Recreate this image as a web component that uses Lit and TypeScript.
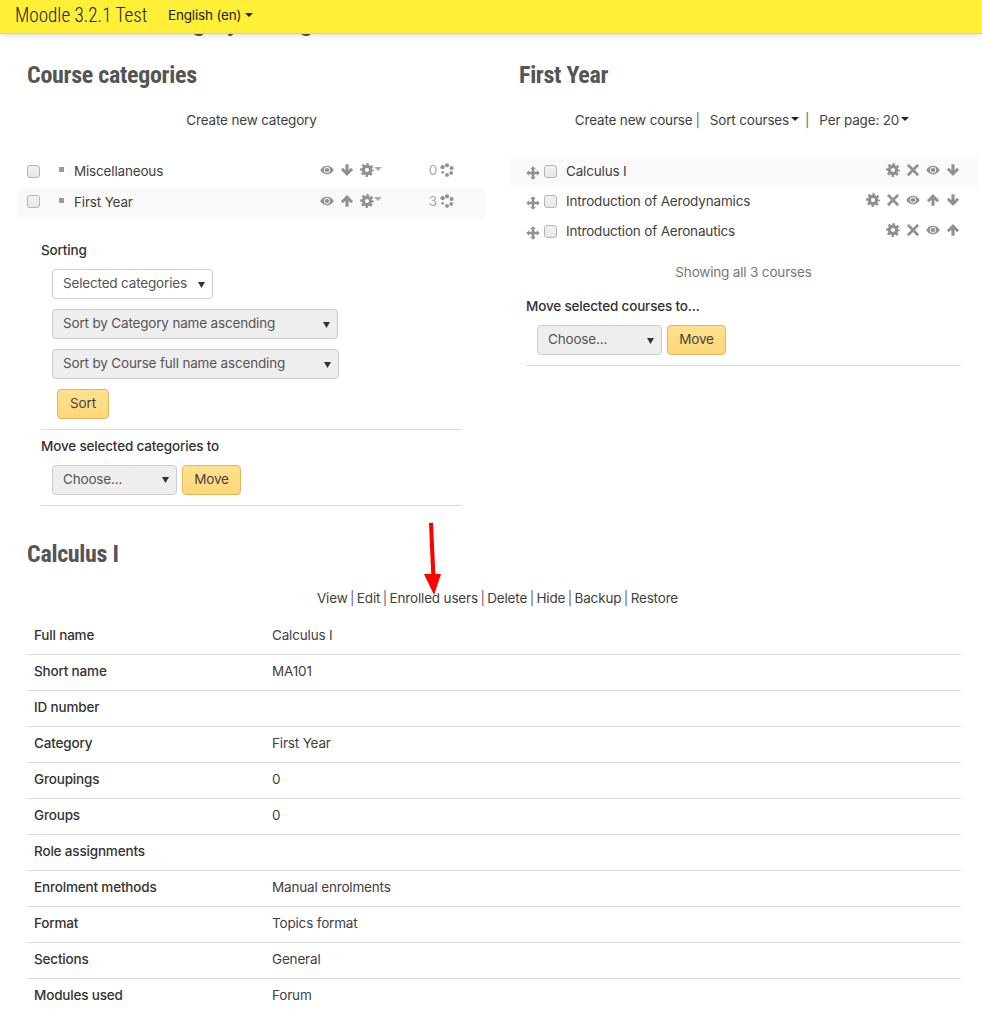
import { LitElement, html, css, svg } from "lit";
import { customElement } from "lit/decorators.js";

const G = "#919191";
const ic = (body: unknown, cls = "") =>
  html`<svg class="ic ${cls}" viewBox="0 0 16 16" width="14" height="14">${body}</svg>`;
const eye = () => ic(svg`<path fill="${G}" d="M8 3C4.500 3 1.700 5.400.3 8c1.400 2.600 4.200 5 7.700 5s6.300-2.400 7.700-5C14.300 5.400 11.500 3 8 3z"/><circle cx="8" cy="8" r="3.600" fill="#e6e6e6"/><circle cx="8" cy="8" r="2.400" fill="${G}"/>`);
const down = () => ic(svg`<path fill="${G}" d="M6.200 1.500h3.600v6.700l2.800-2.800 2.400 2.400L8 14.800 1 7.800l2.400-2.400 2.800 2.800z"/>`);
const up = () => ic(svg`<path fill="${G}" d="M6.200 14.500h3.600V7.800l2.800 2.800 2.400-2.400L8 1.200 1 8.200l2.400 2.400 2.800-2.800z"/>`);
const gear = () => ic(svg`<circle cx="8" cy="8" r="4.200" fill="none" stroke="${G}" stroke-width="3.600"/><circle cx="8" cy="8" r="6.500" fill="none" stroke="${G}" stroke-width="2.800" stroke-dasharray="2.700 2.404" stroke-dashoffset="1.350"/>`);
const times = () => ic(svg`<path fill="${G}" d="M3.200 1L8 5.800 12.800 1 15 3.200 10.200 8l4.800 4.800-2.200 2.200L8 10.200 3.200 15 1 12.800 5.800 8 1 3.200z"/>`);
const move = () => ic(svg`<path fill="${G}" d="M8 .3l3.200 3.200H9.500v3h3V4.800L15.700 8l-3.200 3.200V9.500h-3v3h1.700L8 15.700l-3.200-3.200h1.700v-3h-3v1.700L.3 8l3.200-3.200v1.700h3v-3H4.800z"/>`, "mv");
const cohort = () => ic(svg`<g fill="${G}"><circle cx="8" cy="2.700" r="2.400"/><circle cx="13.200" cy="5.700" r="2.300"/><circle cx="12.800" cy="11.300" r="2.100"/><circle cx="8" cy="13.600" r="2.200"/><circle cx="3" cy="10.700" r="1.500"/><circle cx="2.900" cy="4.800" r="2.400"/></g>`);
const caret = () => html`<span class="caret"></span>`;

const tableRows = [
  ["Full name", "Calculus I"], ["Short name", "MA101"], ["ID number", ""], ["Category", "First Year"],
  ["Groupings", "0"], ["Groups", "0"], ["Role assignments", ""], ["Enrolment methods", "Manual enrolments"],
  ["Format", "Topics format"], ["Sections", "General"], ["Modules used", "Forum"],
];
const cats = [
  { n: "Miscellaneous", i: down, c: "0", alt: false },
  { n: "First Year", i: up, c: "3", alt: true },
];
const courses = [
  { n: "Calculus I", icons: [gear, times, eye, down], alt: true },
  { n: "Introduction of Aerodynamics", icons: [gear, times, eye, up, down], alt: false },
  { n: "Introduction of Aeronautics", icons: [gear, times, eye, up], alt: false },
];
const links = ["View", "Edit", "Enrolled users", "Delete", "Hide", "Backup", "Restore"];

@customElement("app-root")
export class AppRoot extends LitElement {
  static styles = css`
    :host { display: block; position: relative; height: 1009px; overflow: hidden; background: #fff;
      font-family: "Inter", "Lato", sans-serif; font-size: 13.500px; color: #3f3f3f; letter-spacing: -0.17px; }
    * { box-sizing: border-box; }
    .navbar { position: absolute; left: 0; top: 0; right: 0; height: 34px; background: #ffef36; border-bottom: 1px solid #f2dc20;
      box-shadow: 0 2px 6px rgba(0,0,0,.12); display: flex; align-items: center; padding: 0 0 3px 15px; color: #222; z-index: 2; }
    .brand { font-family: "Roboto Condensed", "Liberation Sans Narrow", "Roboto", sans-serif; font-size: 21px; font-weight: 300; letter-spacing: 0; width: 153px; white-space: nowrap; transform: scaleX(.91); transform-origin: left center; }
    .lang { display: flex; align-items: center; gap: 4px; }
    .caret { display: inline-block; width: 0; height: 0; border: 4px solid transparent; border-top-color: #222; border-bottom: 0; }
    .page-title { margin: 0; height: 0; padding-left: 27px; font: 700 26px/1 "Roboto Condensed", "Liberation Sans Narrow", "Roboto", sans-serif; color: #555; white-space: nowrap; transform: translateY(9px); }
    h3 { margin: 0; color: #555; font: 700 24px/30px "Roboto Condensed", "Liberation Sans Narrow", "Roboto", sans-serif; letter-spacing: -0.3px; }
    .cols { display: grid; grid-template-columns: 467px 467px; column-gap: 25px; padding: 60px 0 0 18px; height: 506px; }
    .col h3 { padding-left: 9px; }
    .bar { height: 20px; margin-top: 20px; line-height: 20px; display: flex; justify-content: center; align-items: center; }
    .bar.r { padding-right: 3px; }
    .bar .sep { color: #667; margin: 0 10px 0 3px; }
    .bar .sep.two { margin-left: 6px; }
    .bar .c { margin-left: 2px; display: flex; margin-top: -2px; }
    .rows { margin-top: 27px; }
    .cat { height: 31px; display: flex; align-items: center; padding: 0 0 3px 9px; }
    .cat.alt .check { margin-top: -2px; }
    .cat.alt .acts { margin-top: -3px; }
    .alt { background: #f9f9f9; }
    .check { appearance: none; margin: 0; width: 13px; height: 13px; border: 1px solid #b4b4b4; border-radius: 3px; background: linear-gradient(#f2f2f2, #e6e6e6); flex: none; }
    .bullet { width: 5px; height: 5px; background: #999; margin: -3px 10px 0 19px; flex: none; }
    .name { flex: 1; }
    .acts { display: flex; align-items: center; gap: 6px; margin-top: -2px; }
    .ic { display: block; flex: none; }
    .cat .acts { margin-right: 31px; }
    .acts .caret { border-width: 4px 4px 0; margin-left: -6px; border-top-color: #aaa; margin-top: -3px; }
    .count { color: #aaa; margin-left: 41px; margin-right: -3px; }
    .sortbox { padding: 21px 23px 0 23px; }
    .lbl { font-weight: 500; height: 20px; line-height: 20px; color: #333; }
    select { appearance: none; display: block; height: 30px; padding: 0 20px 2px 10px; border: 1px solid #ccc; border-radius: 4px; font: inherit; letter-spacing: inherit; color: #555;
      background: #eee url("data:image/svg+xml,%3Csvg xmlns='http://www.w3.org/2000/svg' width='7' height='7'%3E%3Cpath d='M0 1h7L3.500 7z' fill='%23333'/%3E%3C/svg%3E") no-repeat right 7px center; }
    select.w { background-color: #fff; }
    .in { margin: 10px 0 0 11px; }
    .in.first { margin-top: 9px; }
    .btn { height: 30px; border: 1px solid #e0b65c; border-radius: 4px; background: linear-gradient(#ffe08f, #ffd778); color: #444; font: inherit; letter-spacing: inherit; padding: 0 0 2px; flex: none; }
    .sort { display: block; width: 52px; margin: 10px 0 9.500px 16px; }
    .w161 { width: 161px; } .w286 { width: 286px; } .w287 { width: 287px; } .w125 { width: 125px; } .w59 { width: 59px; }
    hr { margin: 0; border: 0; border-top: 1px solid #ddd; }
    .gap6 { margin-top: 6px; }
    .gap10 { margin-top: 10px; }
    .mv-row { display: flex; gap: 5px; margin: 9px 0 0 11px; }
    .course { height: 30px; display: flex; align-items: center; padding: 0 17px 2px 16px; }
    .course .mv { margin: 4px 4px 0 0; }
    .course .name { margin-left: 9px; }
    .showing { text-align: center; color: #777; margin-top: 15px; line-height: 20px; }
    .rightbox { padding: 14px 16px 0; }
    .details { padding: 0 21px 0 27px; }
    .details h3 { height: 30px; margin-top: 33px; }
    .links { display: flex; justify-content: center; gap: 2.500px; margin-top: 19px; height: 20px; line-height: 20px; padding-left: 7px; }
    .links i { font-style: normal; color: #667; }
    .table { margin-top: 11px; }
    .row { display: grid; grid-template-columns: 238px 1fr; height: 36px; line-height: 33px; border-bottom: 1px solid #ddd; padding-left: 7px; }
    .row b { font-weight: 500; color: #333; }
    .arrow { position: absolute; left: 420px; top: 520px; z-index: 1; }
  `;

  render() {
    return html`
      <div class="navbar">
        <div class="brand">Moodle 3.2.1 Test</div>
        <div class="lang">English (en) ${caret()}</div>
      </div>
      <div class="page-title">Course and category management</div>
      <div class="cols">
        <section class="col">
          <h3>Course categories</h3>
          <div class="bar">Create new category</div>
          <div class="rows">
            ${cats.map(c => html`<div class="cat ${c.alt ? "alt" : ""}">
              <input class="check" type="checkbox" />
              <span class="bullet"></span>
              <span class="name">${c.n}</span>
              <span class="acts">${eye()}${c.i()}${gear()}<span class="caret"></span>
                <span class="count">${c.c}</span>${cohort()}</span>
            </div>`)}
          </div>
          <div class="sortbox">
            <div class="lbl">Sorting</div>
            <select class="w in first w161"><option>Selected categories</option></select>
            <select class="in w286"><option>Sort by Category name ascending</option></select>
            <select class="in w287"><option>Sort by Course full name ascending</option></select>
            <button class="btn sort">Sort</button>
            <hr />
            <div class="lbl gap6">Move selected categories to</div>
            <div class="mv-row">
              <select class="w125"><option>Choose...</option></select>
              <button class="btn w59">Move</button>
            </div>
            <hr class="gap10" />
          </div>
        </section>
        <section class="col right">
          <h3>First Year</h3>
          <div class="bar r">Create new course<span class="sep">|</span>Sort courses<span class="c">${caret()}</span><span class="sep two">|</span>Per page: 20<span class="c">${caret()}</span></div>
          <div class="rows">
            ${courses.map(c => html`<div class="course ${c.alt ? "alt" : ""}">
              ${move()}<input class="check" type="checkbox" />
              <span class="name">${c.n}</span>
              <span class="acts">${c.icons.map(i => i())}</span>
            </div>`)}
          </div>
          <div class="showing">Showing all 3 courses</div>
          <div class="rightbox">
            <div class="lbl">Move selected courses to...</div>
            <div class="mv-row">
              <select class="w125"><option>Choose...</option></select>
              <button class="btn w59">Move</button>
            </div>
            <hr class="gap10" />
          </div>
        </section>
      </div>
      <div class="details">
        <h3>Calculus I</h3>
        <div class="links">${links.map((l, i) => html`${i ? html`<i>|</i>` : ""}<span>${l}</span>`)}</div>
        <div class="table">
          ${tableRows.map(([a, b]) => html`<div class="row"><b>${a}</b><span>${b}</span></div>`)}
        </div>
      </div>
      <svg class="arrow" width="30" height="80" viewBox="0 0 30 80">
        <path fill="#f00" d="M9 3l4-.2 2.300 51.200H21L14 75 4 54h7.200z" />
      </svg>
    `;
  }
}
